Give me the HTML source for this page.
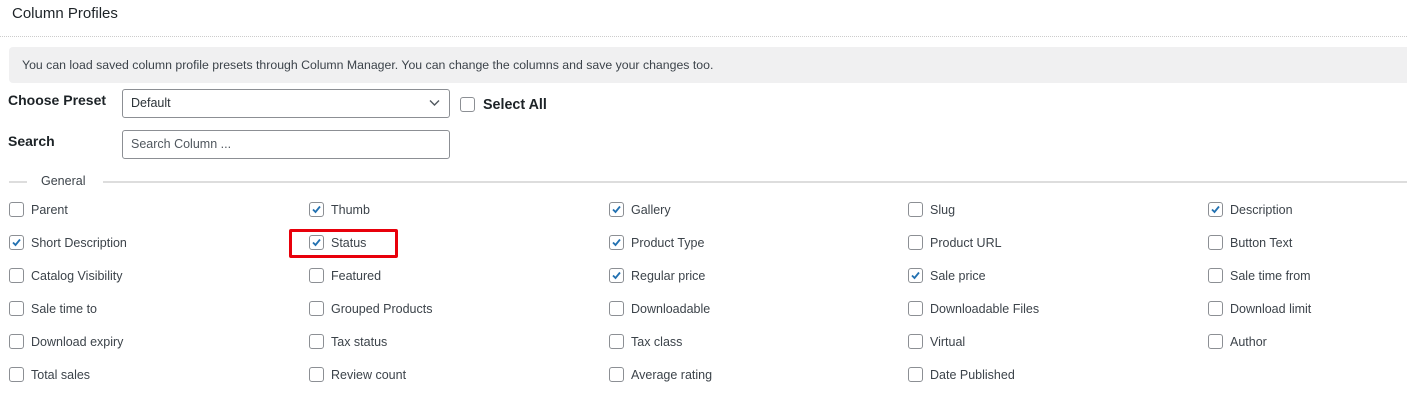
<!DOCTYPE html><html><head><style>
body{margin:0;width:1407px;height:412px;background:#fff;font-family:"Liberation Sans",sans-serif;color:#1d2327;position:relative;overflow:hidden}
.a{position:absolute;white-space:nowrap}
.cb{position:absolute;width:13px;height:13px;border:1px solid #8c8f94;border-radius:3px;background:#fff}
.cb svg{position:absolute;left:1px;top:1px}
.l{position:absolute;font-size:12.5px;color:#3c434a;line-height:16px}
</style></head><body>
<div class="a" style="left:12px;top:5px;font-size:15px;line-height:18px">Column Profiles</div>
<div class="a" style="left:0;top:36px;width:1407px;border-top:1px dotted #ccc"></div>
<div class="a" style="left:9px;top:47px;width:1398px;height:36px;background:#f0f0f1;border-radius:4px 0 0 4px"></div>
<div class="a" style="left:22px;top:58px;font-size:12.3px;color:#3c434a;line-height:15px">You can load saved column profile presets through Column Manager. You can change the columns and save your changes too.</div>
<div class="a" style="left:8px;top:91px;font-size:14px;font-weight:bold;line-height:18px">Choose Preset</div>
<div class="a" style="left:122px;top:89px;width:326px;height:27px;border:1px solid #8c8f94;border-radius:3px"></div>
<div class="a" style="left:131px;top:95px;font-size:12.5px;line-height:16px;color:#2c3338">Default</div>
<svg class="a" style="left:429px;top:99px" width="11" height="8"><path d="M1 1.5L5.5 6L10 1.5" fill="none" stroke="#50575e" stroke-width="1.4"/></svg>
<div class="cb" style="left:460px;top:97px;width:13px;height:13px"></div>
<div class="a" style="left:483px;top:96px;font-size:14.3px;font-weight:bold;line-height:18px">Select All</div>
<div class="a" style="left:8px;top:132px;font-size:14px;font-weight:bold;line-height:18px">Search</div>
<div class="a" style="left:122px;top:130px;width:326px;height:27px;border:1px solid #8c8f94;border-radius:3px"></div>
<div class="a" style="left:131px;top:136px;font-size:12.5px;line-height:16px;color:#50575e">Search Column ...</div>
<div class="a" style="left:9px;top:181px;width:18px;border-top:2px solid #ddd"></div>
<div class="a" style="left:41px;top:174px;font-size:12.5px;line-height:15px;color:#3c434a">General</div>
<div class="a" style="left:103px;top:181px;width:1304px;border-top:2px solid #ddd"></div>
<div class="a" style="left:289px;top:229px;width:103px;height:23px;border:3px solid #e8000b;border-radius:2px"></div>
<div id="g"></div>
<script>
var cols=[9,309,609,908,1208],rows=[209,242,275,308,341,374];
var d=[["Parent",0],["Thumb",1],["Gallery",1],["Slug",0],["Description",1],
["Short Description",1],["Status",1],["Product Type",1],["Product URL",0],["Button Text",0],
["Catalog Visibility",0],["Featured",0],["Regular price",1],["Sale price",1],["Sale time from",0],
["Sale time to",0],["Grouped Products",0],["Downloadable",0],["Downloadable Files",0],["Download limit",0],
["Download expiry",0],["Tax status",0],["Tax class",0],["Virtual",0],["Author",0],
["Total sales",0],["Review count",0],["Average rating",0],["Date Published",0]];
var h="";d.forEach(function(e,i){var x=cols[i%5],y=rows[Math.floor(i/5)];
h+='<div class="cb" style="left:'+x+'px;top:'+(y-7)+'px">'+(e[1]?'<svg width="11" height="11"><path d="M2 5.5L4.5 8L9 2.5" fill="none" stroke="#2271b1" stroke-width="1.8"/></svg>':'')+'</div>';
h+='<div class="l" style="left:'+(x+22)+'px;top:'+(y-7)+'px">'+e[0]+'</div>';});
document.getElementById("g").innerHTML=h;
</script>
</body></html>
